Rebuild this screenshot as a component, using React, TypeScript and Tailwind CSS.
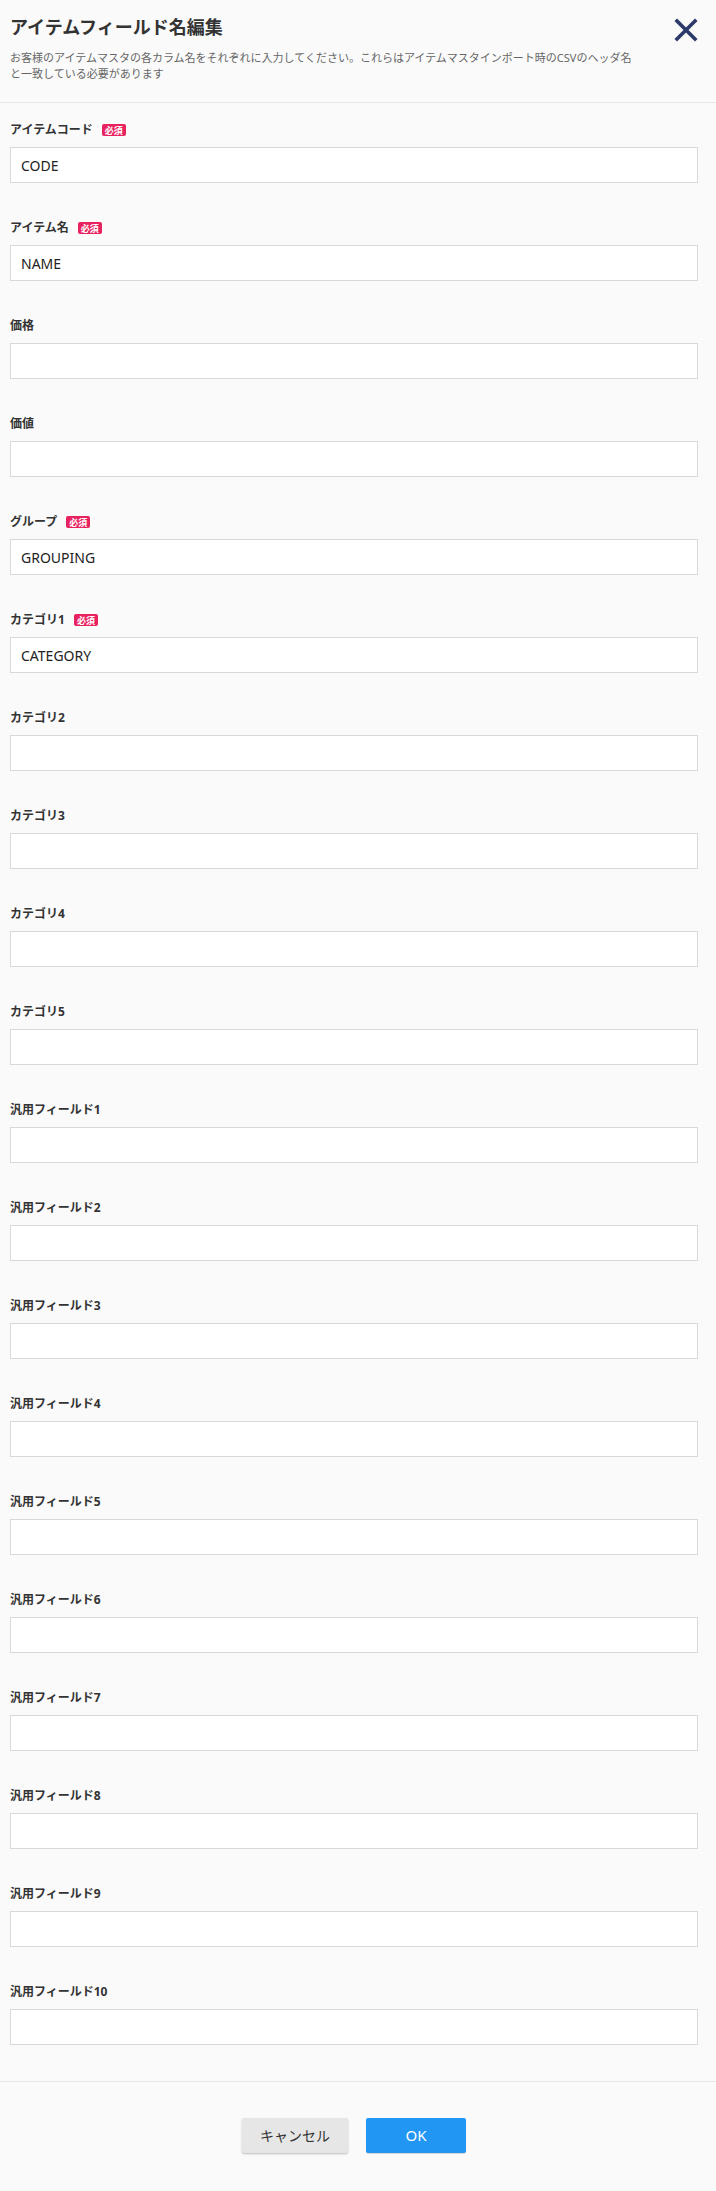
import React from "react";

type Field = { label: string; required?: boolean; value?: string };

const fields: Field[] = [
  { label: "アイテムコード", required: true, value: "CODE" },
  { label: "アイテム名", required: true, value: "NAME" },
  { label: "価格" },
  { label: "価値" },
  { label: "グループ", required: true, value: "GROUPING" },
  { label: "カテゴリ1", required: true, value: "CATEGORY" },
  { label: "カテゴリ2" },
  { label: "カテゴリ3" },
  { label: "カテゴリ4" },
  { label: "カテゴリ5" },
  { label: "汎用フィールド1" },
  { label: "汎用フィールド2" },
  { label: "汎用フィールド3" },
  { label: "汎用フィールド4" },
  { label: "汎用フィールド5" },
  { label: "汎用フィールド6" },
  { label: "汎用フィールド7" },
  { label: "汎用フィールド8" },
  { label: "汎用フィールド9" },
  { label: "汎用フィールド10" },
];

const jp = "font-['Noto_Sans','Noto_Sans_CJK_JP',sans-serif]";

export default function App() {
  return (
    <div className={`min-h-screen w-[716px] bg-[#fafafa] ${jp}`}>
      <header className="flex items-start justify-between border-b border-[#e6e6e6] pl-[10px] pr-[18px] pt-[14px] pb-[20px]">
        <div>
          <h1 className="text-[18px] font-bold leading-[27px] text-[#333]">アイテムフィールド名編集</h1>
          <p className="mt-[9px] w-[627px] text-[11px] leading-[16px] text-[#666]">
            お客様のアイテムマスタの各カラム名をそれぞれに入力してください。これらはアイテムマスタインポート時のCSVのヘッダ名と一致している必要があります
          </p>
        </div>
        <button className="mt-[4px] flex h-[24px] w-[24px] items-center justify-center">
          <svg width="24" height="24" viewBox="0 0 24 24">
            <path d="M3 3 L21 21 M21 3 L3 21" stroke="#2b3a68" strokeWidth="3.6" strokeLinecap="square" fill="none" />
          </svg>
        </button>
      </header>

      <main className="pl-[10px] pr-[18px] pt-[18px]">
        {fields.map((f) => (
          <div key={f.label} className="mb-[36px]">
            <div className="flex h-[18px] items-center gap-[9px]">
              <span className="text-[12px] font-bold leading-[18px] text-[#333]">{f.label}</span>
              {f.required && (
                <span className="inline-flex h-[12px] items-center rounded-[2px] bg-[#e8225f] px-[3px] text-[9px] font-bold leading-none text-white">
                  必須
                </span>
              )}
            </div>
            <input
              readOnly
              value={f.value ?? ""}
              className="mt-[8px] block h-[36px] w-full border border-[#d9d9d9] bg-white px-[10px] text-[14px] text-[#222] outline-none"
            />
          </div>
        ))}
      </main>

      <footer className="flex justify-center gap-[18px] border-t border-[#e6e6e6] pr-[8px] pt-[36px] pb-[37px]">
        <button className="h-[35px] w-[106px] rounded-[2px] bg-[#e6e6e6] text-[14px] text-[#333] shadow-[0_1px_2px_rgba(0,0,0,0.25)]">
          キャンセル
        </button>
        <button className="h-[35px] w-[100px] rounded-[2px] bg-[#2196f3] text-[15px] text-white shadow-[0_1px_1px_rgba(0,0,0,0.15)]">
          OK
        </button>
      </footer>
    </div>
  );
}
